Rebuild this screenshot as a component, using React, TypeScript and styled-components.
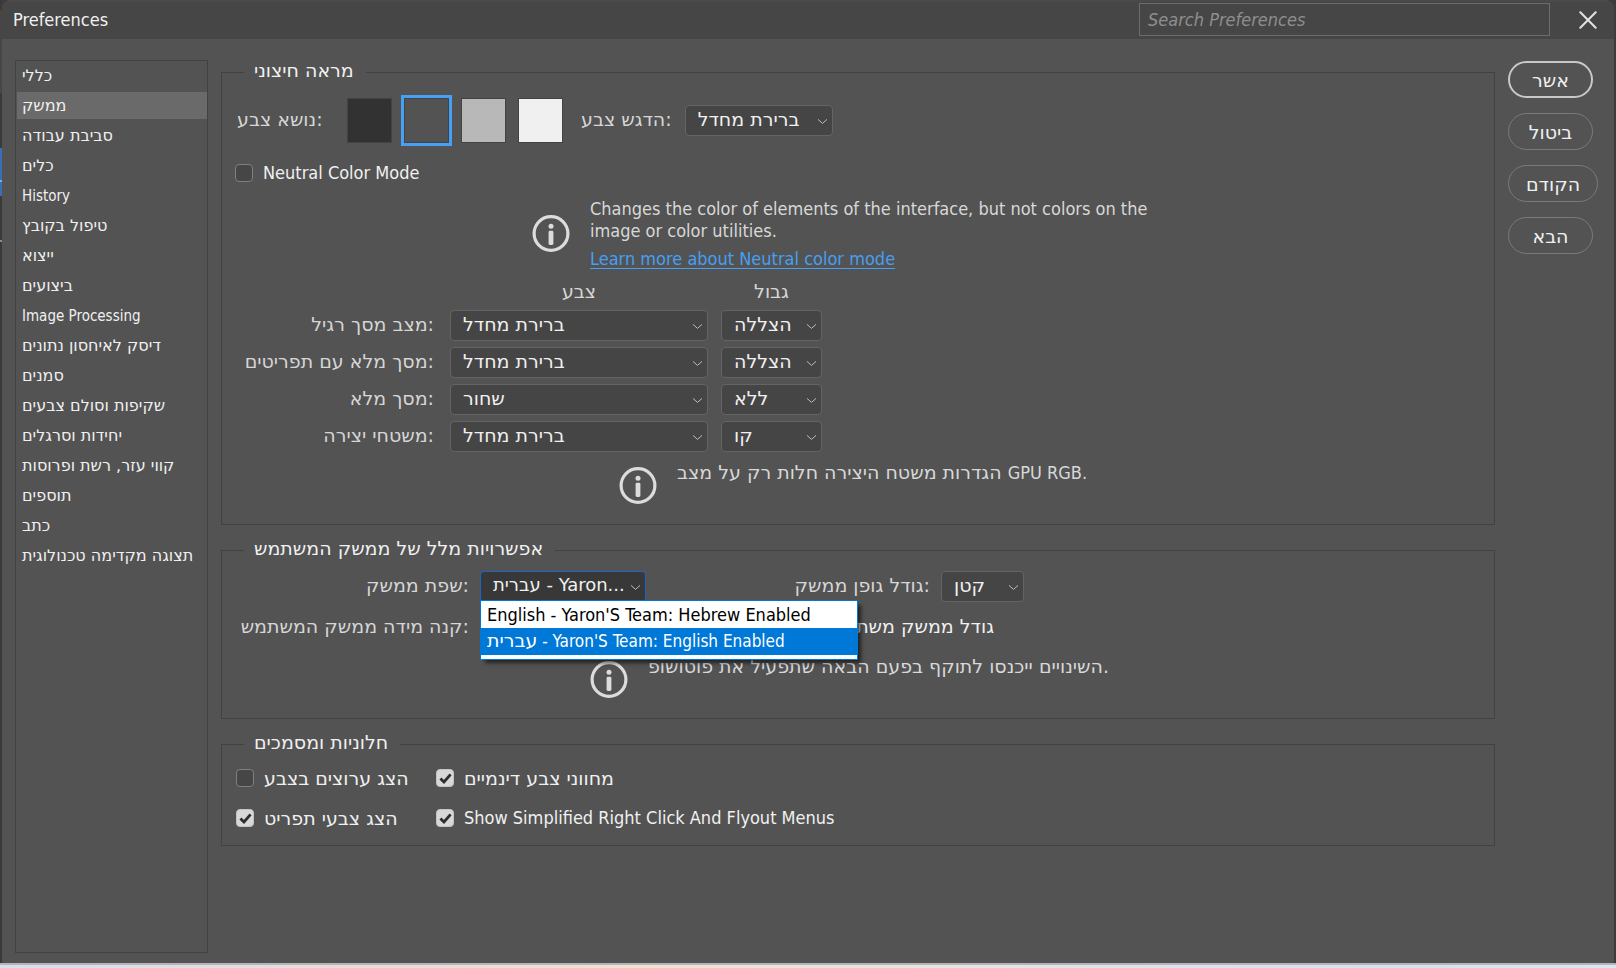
import React, { useState } from 'react';
import styled, { createGlobalStyle, css } from 'styled-components';

const LATIN = '"DejaVu Sans Condensed", "DejaVu Sans", sans-serif';
const HEBREW = '"DejaVu Sans", "Liberation Sans", sans-serif';

const GlobalStyle = createGlobalStyle`
  *, *::before, *::after { box-sizing: border-box; }
  html, body { margin: 0; background: #3c3c3c; }
  body { font: 18px/22px ${LATIN}; color: #f0f0f0; }
  button, input, select { font: inherit; color: inherit; margin: 0; }
`;

const hebrewText = css`
  font-family: ${HEBREW};
  font-size: 19px;
`;

const Backdrop = styled.div`
  display: flex;
  flex-direction: column;
  min-height: 100vh;
  padding: 0 2px;
  background: linear-gradient(
    #3a3a3a 0 10px, #464646 10px 93px, #3a3a3a 93px 148px, #386fb5 148px 180px,
    #9aa7b8 180px 182px, #386fb5 182px 196px, #3a3a3a 196px 240px,
    #8a8a8a 240px 242px, #3a3a3a 242px
  ) left / 2px 100% no-repeat, #3c3c3c;
`;

const Dialog = styled.main`
  flex: 1;
  display: flex;
  flex-direction: column;
  background: #535353;
  border-radius: 9px 9px 2px 2px;
  overflow: hidden;
`;

const DesktopEdge = styled.div`
  height: 5px;
  margin: 0 -2px;
  border-top: 2px solid #b4b5ba;
  background: linear-gradient(90deg, #d8dfec, #ecdcd6 25%, #efe3cd 40%, #e6e4e2 60%, #d9e0ee 85%, #dde4f2);
`;

const TitleBar = styled.header`
  display: flex;
  align-items: center;
  gap: 28px;
  height: 39px;
  padding: 0 16px 0 11px;
  background: linear-gradient(#4a4a4a 2px, #464646 2px);
`;

const Title = styled.h1`
  flex: 1;
  margin: 0;
  font-size: 18px;
  line-height: 24px;
  font-weight: 400;
`;

const Search = styled.input`
  width: 411px;
  height: 33px;
  padding: 0 8px;
  border: 1px solid #6c6c6c;
  background: #464646;
  outline: none;
  &::placeholder { color: #8e8e8e; font-style: italic; opacity: 1; }
`;

const CloseButton = styled.button`
  display: grid;
  place-items: center;
  width: 20px;
  height: 32px;
  padding: 0;
  border: 0;
  background: none;
`;

const Body = styled.div`
  flex: 1;
  display: grid;
  grid-template-columns: 193px minmax(0, 1fr) 91px;
  gap: 13px;
  padding: 21px 15px 10px 13px;
`;

const Sidebar = styled.nav`
  border: 1px solid #424242;
  padding: 1px 0 1px 1px;
`;

const CategoryList = styled.ul`
  display: flex;
  flex-direction: column;
  gap: 3px;
  margin: 0;
  padding: 0;
  list-style: none;
`;

const Category = styled.button<{ $selected: boolean; $hebrew: boolean }>`
  display: block;
  width: 100%;
  height: 27px;
  padding: 0 5px;
  border: 0;
  text-align: left;
  white-space: nowrap;
  background: ${p => (p.$selected ? '#6a6a6a' : 'transparent')};
  font-family: ${p => (p.$hebrew ? HEBREW : LATIN)};
  font-size: ${p => (p.$hebrew ? 16 : 15)}px;
`;

const Panels = styled.div`
  display: flex;
  flex-direction: column;
  gap: 14px;
  padding-top: 1px;
`;

const Group = styled.fieldset`
  min-width: 0;
  margin: 0;
  padding: 15px 13px 19px;
  border: 1px solid #424242;
`;

const TextGroup = styled(Group)`
  padding-top: 10px;
`;

const TabsGroup = styled(Group)`
  padding: 12px 13px 16px;
`;

const Legend = styled.legend`
  ${hebrewText}
  margin-left: 9px;
  padding: 0 12px 3px 10px;
  line-height: 19px;
`;

const ThemeRow = styled.div`
  display: flex;
  align-items: center;
  gap: 13px;
`;

const ThemeCaption = styled.span`
  ${hebrewText}
  width: 99px;
  padding: 0 0 3px 2px;
  color: #d6d6d6;
`;

const Swatches = styled.div`
  display: flex;
  gap: 12px;
  margin-right: 5px;
`;

const Swatch = styled.input<{ $color: string }>`
  appearance: none;
  width: 45px;
  height: 45px;
  border: 1px solid #434343;
  background: ${p => p.$color};
  &:checked { outline: 3px solid #46a0f5; }
`;

const Caption = styled.label`
  ${hebrewText}
  padding-bottom: 3px;
  color: #d6d6d6;
  white-space: nowrap;
`;

const EndCaption = styled(Caption)`
  text-align: right;
`;

const RowCaption = styled(EndCaption)`
  padding-right: 3px;
`;

const ColumnCaption = styled.span`
  ${hebrewText}
  height: 24px;
  color: #d6d6d6;
  text-align: center;
`;

const SelectBox = styled.span<{ $width?: number }>`
  display: grid;
  align-items: center;
  width: ${p => (p.$width ? `${p.$width}px` : '100%')};
  & > * { grid-area: 1 / 1; }
  & > svg { justify-self: end; margin: 2px 5px 0 0; pointer-events: none; }
`;

const Select = styled.select<{ $open?: boolean }>`
  ${hebrewText}
  appearance: none;
  width: 100%;
  height: 31px;
  padding: 0 20px 3px 12px;
  border: 1px solid ${p => (p.$open ? '#1a66c4' : '#646464')};
  border-radius: 4px;
  background: ${p => (p.$open ? '#383838' : '#454545')};
  outline: none;
`;

const LanguageSelect = styled(Select)`
  padding-right: 16px;
  font-size: 18px;
`;

const CheckRow = styled.label`
  display: flex;
  align-items: center;
  gap: 10px;
  width: fit-content;
`;

const NeutralRow = styled(CheckRow)`
  margin-top: 19px;
`;

const CheckFrame = styled.span`
  display: grid;
  place-items: center;
  & > * { grid-area: 1 / 1; }
  & > svg { pointer-events: none; }
`;

const CheckInput = styled.input`
  appearance: none;
  width: 18px;
  height: 18px;
  border: 1px solid #808080;
  border-radius: 4px;
  background: #464646;
  &:checked { background: #d8d8d8; border-color: #c4c4c4; }
  & + svg { visibility: hidden; }
  &:checked + svg { visibility: visible; }
`;

const CheckGrid = styled.div`
  display: grid;
  grid-template-columns: 200px auto;
  gap: 18px 0;
  padding-left: 1px;
`;

const Hebrew = styled.span`
  ${hebrewText}
`;

const Note = styled.div<{ $indent: number }>`
  display: flex;
  align-items: center;
  gap: 20px;
  margin: 14px 0 10px ${p => p.$indent}px;
  color: #d8d8d8;
  & > svg { flex: none; }
`;

const TopNote = styled(Note)`
  align-items: flex-start;
  margin-top: 9px;
  margin-bottom: 0;
  & > svg { margin-top: 6px; }
`;

const NoteText = styled.p`
  margin: 0 0 6px;
  max-width: 580px;
`;

const Line = styled.p`
  margin: 0;
`;

const Link = styled.a`
  color: #469ff2;
  text-underline-offset: 3px;
  text-decoration-thickness: 1px;
`;

const ModeGrid = styled.div`
  display: grid;
  grid-template-columns: 202px 258px 101px;
  gap: 6px 13px;
  align-items: center;
`;

const TextGrid = styled.div`
  display: grid;
  grid-template-columns: 234px 166px 273px 83px;
  gap: 13px 11px;
  align-items: center;
  margin-bottom: 15px;
`;

const ScaleValue = styled.span`
  ${hebrewText}
  grid-column: 3 / 5;
  padding: 0 30px 3px 0;
  text-align: right;
`;

const LanguagePicker = styled.div`
  position: relative;
`;

const Popup = styled.ul`
  position: absolute;
  z-index: 2;
  top: 29px;
  left: 0;
  width: 378px;
  margin: 0;
  padding: 0 0 4px;
  border: 1px solid #0078d7;
  background: #fff;
  box-shadow: 4px 4px 4px -1px rgba(0, 0, 0, 0.6);
  list-style: none;
`;

const PopupItem = styled.li<{ $selected?: boolean }>`
  height: 27px;
  padding: 0 6px;
  font-size: ${p => (p.$selected ? 17 : 18)}px;
  line-height: ${p => (p.$selected ? 24 : 28)}px;
  white-space: nowrap;
  color: ${p => (p.$selected ? '#fff' : '#000')};
  background: ${p => (p.$selected ? '#0078d7' : '#fff')};
`;

const Actions = styled.div`
  display: flex;
  flex-direction: column;
  align-items: flex-start;
  gap: 15px;
  padding-top: 1px;
`;

const Action = styled.button<{ $primary?: boolean }>`
  ${hebrewText}
  min-width: 85px;
  height: 37px;
  padding: 0 17px;
  border: ${p => (p.$primary ? '2px solid #c8c8c8' : '1px solid #7a7a7a')};
  border-radius: 19px;
  background: none;
`;

const Chevron = () => (
  <svg width="11" height="7" viewBox="0 0 11 7" fill="none" stroke="#bcbcbc" strokeWidth="1" aria-hidden="true">
    <path d="M1 1.4 5.5 5.4 10 1.4" />
  </svg>
);

const InfoIcon = () => (
  <svg width="38" height="38" viewBox="0 0 38 38" aria-hidden="true">
    <circle cx="19" cy="18.5" r="16.9" fill="none" stroke="#dcdcdc" strokeWidth="3.2" />
    <circle cx="19" cy="11.2" r="2.5" fill="#dcdcdc" />
    <rect x="16.6" y="15.8" width="4.8" height="14.2" rx="1.4" fill="#dcdcdc" />
  </svg>
);

function Dropdown({ id, label, value, width }: { id?: string; label?: string; value: string; width?: number }) {
  return (
    <SelectBox $width={width}>
      <Select id={id} aria-label={label} defaultValue={value}>
        <option>{value}</option>
      </Select>
      <Chevron />
    </SelectBox>
  );
}

function Check({ checked }: { checked?: boolean }) {
  return (
    <CheckFrame>
      <CheckInput type="checkbox" defaultChecked={checked} />
      <svg width="13" height="11" viewBox="0 0 13 11" fill="none" stroke="#2e2e2e" strokeWidth="2.8" aria-hidden="true">
        <path d="M1.4 5.4 5 9 11.6 1.4" />
      </svg>
    </CheckFrame>
  );
}

const categories = [
  'כללי', 'ממשק', 'סביבת עבודה', 'כלים', 'History', 'טיפול בקובץ', 'ייצוא', 'ביצועים',
  'Image Processing', 'דיסק לאיחסון נתונים', 'סמנים', 'שקיפות וסולם צבעים', 'יחידות וסרגלים',
  'קווי עזר, רשת ופרוסות', 'תוספים', 'כתב', 'תצוגה מקדימה טכנולוגית',
];

const themes = ['#323232', '#535353', '#b8b8b8', '#f0f0f0'];

const modes = [
  { id: 'standard', name: 'מצב מסך רגיל:', color: 'ברירת מחדל', border: 'הצללה' },
  { id: 'menus', name: 'מסך מלא עם תפריטים:', color: 'ברירת מחדל', border: 'הצללה' },
  { id: 'full', name: 'מסך מלא:', color: 'שחור', border: 'ללא' },
  { id: 'artboards', name: 'משטחי יצירה:', color: 'ברירת מחדל', border: 'קו' },
];

export default function App() {
  const [category, setCategory] = useState('ממשק');

  return (
    <Backdrop>
      <GlobalStyle />
      <Dialog>
        <TitleBar>
          <Title>Preferences</Title>
          <Search type="search" placeholder="Search Preferences" aria-label="Search Preferences" />
          <CloseButton aria-label="Close">
            <svg width="18" height="18" viewBox="0 0 18 18" stroke="#e4e4e4" strokeWidth="2" strokeLinecap="round" aria-hidden="true">
              <path d="M1.3 1.3 16.7 16.7M16.7 1.3 1.3 16.7" />
            </svg>
          </CloseButton>
        </TitleBar>

        <Body>
          <Sidebar>
            <CategoryList>
              {categories.map(name => (
                <li key={name}>
                  <Category
                    $selected={name === category}
                    $hebrew={/[\u0590-\u05ff]/.test(name)}
                    onClick={() => setCategory(name)}
                  >
                    {name}
                  </Category>
                </li>
              ))}
            </CategoryList>
          </Sidebar>

          <Panels>
            <Group>
              <Legend>מראה חיצוני</Legend>
              <ThemeRow>
                <ThemeCaption id="theme-caption">נושא צבע:</ThemeCaption>
                <Swatches role="radiogroup" aria-labelledby="theme-caption">
                  {themes.map((color, i) => (
                    <Swatch key={color} type="radio" name="theme" aria-label={color} $color={color} defaultChecked={i === 1} />
                  ))}
                </Swatches>
                <Caption htmlFor="highlight">הדגש צבע:</Caption>
                <Dropdown id="highlight" value="ברירת מחדל" width={148} />
              </ThemeRow>
              <NeutralRow>
                <Check />
                Neutral Color Mode
              </NeutralRow>
              <Note $indent={297}>
                <InfoIcon />
                <div>
                  <NoteText>
                    Changes the color of elements of the interface, but not colors on the image or color utilities.
                  </NoteText>
                  <Link href="#neutral">Learn more about Neutral color mode</Link>
                </div>
              </Note>
              <ModeGrid>
                <span />
                <ColumnCaption>צבע</ColumnCaption>
                <ColumnCaption>גבול</ColumnCaption>
                {modes.map(mode => (
                  <React.Fragment key={mode.id}>
                    <RowCaption htmlFor={mode.id}>{mode.name}</RowCaption>
                    <Dropdown id={mode.id} value={mode.color} />
                    <Dropdown label={`${mode.name} גבול`} value={mode.border} />
                  </React.Fragment>
                ))}
              </ModeGrid>
              <TopNote $indent={384}>
                <InfoIcon />
                <Line><Hebrew>הגדרות משטח היצירה חלות רק על מצב </Hebrew>GPU RGB.</Line>
              </TopNote>
            </Group>

            <TextGroup>
              <Legend>אפשרויות מלל של ממשק המשתמש</Legend>
              <TextGrid>
                <EndCaption htmlFor="language">שפת ממשק:</EndCaption>
                <LanguagePicker>
                  <SelectBox>
                    <LanguageSelect id="language" $open defaultValue="he">
                      <option value="he">עברית - Yaron...</option>
                    </LanguageSelect>
                    <Chevron />
                  </SelectBox>
                  <Popup role="listbox" aria-label="שפת ממשק">
                    <PopupItem role="option" aria-selected="false">English - Yaron'S Team: Hebrew Enabled</PopupItem>
                    <PopupItem role="option" aria-selected="true" $selected>
                      <Hebrew>עברית</Hebrew> - Yaron'S Team: English Enabled
                    </PopupItem>
                  </Popup>
                </LanguagePicker>
                <EndCaption htmlFor="font-size">גודל גופן ממשק:</EndCaption>
                <Dropdown id="font-size" value="קטן" />
                <EndCaption as="span">קנה מידה ממשק המשתמש:</EndCaption>
                <ScaleValue>גודל ממשק משתמש</ScaleValue>
              </TextGrid>
              <TopNote $indent={355}>
                <InfoIcon />
                <Line><Hebrew>השינויים ייכנסו לתוקף בפעם הבאה שתפעיל את פוטושופ.</Hebrew></Line>
              </TopNote>
            </TextGroup>

            <TabsGroup>
              <Legend>חלוניות ומסמכים</Legend>
              <CheckGrid>
                <CheckRow><Check /><Hebrew>הצג ערוצים בצבע</Hebrew></CheckRow>
                <CheckRow><Check checked /><Hebrew>מחווני צבע דינמיים</Hebrew></CheckRow>
                <CheckRow><Check checked /><Hebrew>הצג צבעי תפריט</Hebrew></CheckRow>
                <CheckRow><Check checked />Show Simplified Right Click And Flyout Menus</CheckRow>
              </CheckGrid>
            </TabsGroup>
          </Panels>

          <Actions>
            <Action $primary>אשר</Action>
            <Action>ביטול</Action>
            <Action>הקודם</Action>
            <Action>הבא</Action>
          </Actions>
        </Body>
      </Dialog>
      <DesktopEdge />
    </Backdrop>
  );
}
